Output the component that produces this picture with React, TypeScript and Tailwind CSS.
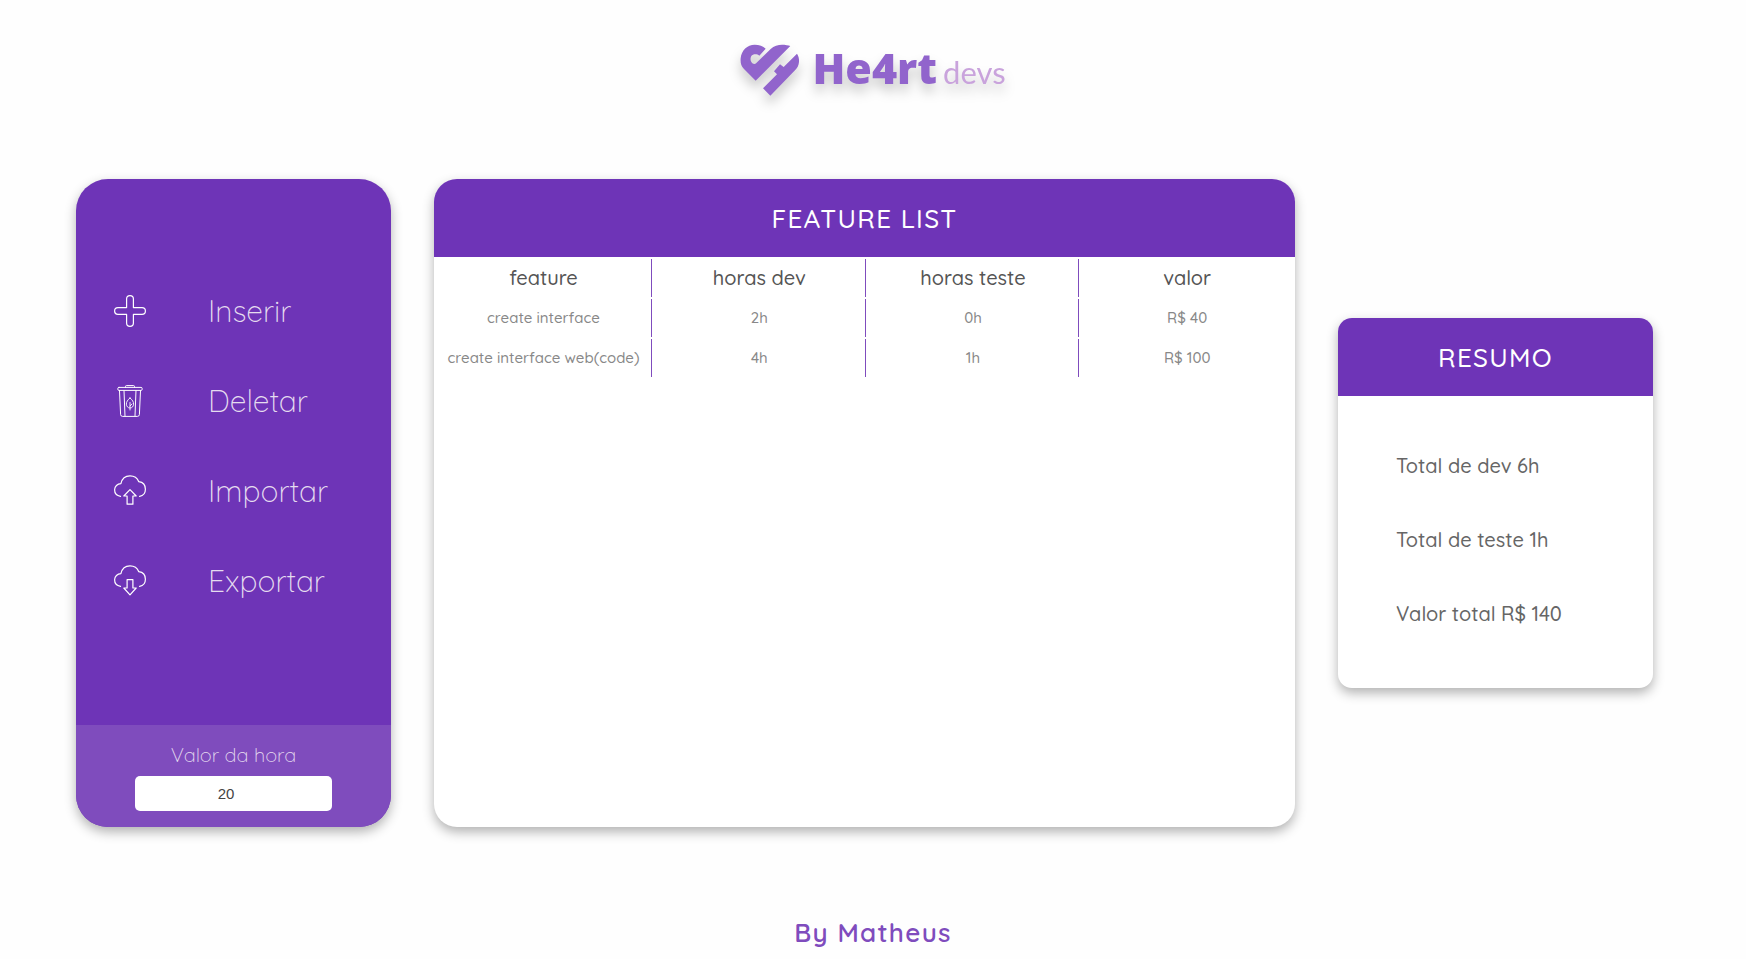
import { useState, type ReactNode } from "react";

function HeartLogo() {
  return (
    <svg viewBox="66 42 180 156" className="h-[52px] w-[60px] shrink-0 fill-[#9164cc]" aria-hidden="true">
      <path d="M113 152 L78 117 C69 108 67 98 68 85 C70 61 88 44 110 44 C124 44 135 48 143 56 L124 77 C117 71 105 71 100 78 C96 85 97 95 103 100 C108 103 112 102 115 99 L158 57 C168 47 180 44 192 44 C202 44 211 46 217 48 Z" />
      <path d="M237 71 C242 79 244 87 243 96 C242 107 238 114 231 121 L157 197 L135 175 L177 133 L168 124 L186 103 L197 111 Z" />
    </svg>
  );
}

function Icon({ children }: { children: ReactNode }) {
  return (
    <svg viewBox="0 0 32 32" className="size-8 shrink-0 fill-none stroke-white" strokeLinejoin="round" strokeLinecap="round" aria-hidden="true">
      {children}
    </svg>
  );
}

const cloud = "M6.5 21.3 C3 20.8 .6 18.3 .6 14.8 C.6 11.4 3.4 8.8 6.9 8.6 C8 3.8 11.6 .9 16 .9 C20.3 .9 23.4 3.2 24.8 6.7 C28.6 7.2 31.4 10 31.4 14.2 C31.4 17.8 29 20.7 25.6 21.3";

const actions = [
  {
    label: "Inserir",
    icon: (
      <path strokeWidth="1.2" d="M12.6 4 a3.4 3.4 0 0 1 6.8 0 V12.6 H28 a3.4 3.4 0 0 1 0 6.8 H19.4 V28 a3.4 3.4 0 0 1 -6.8 0 V19.4 H4 a3.4 3.4 0 0 1 0 -6.8 H12.6 Z" />
    ),
  },
  {
    label: "Deletar",
    icon: (
      <>
        <path d="M11.5 2.3 V1.4 Q11.5 .6 12.4 .6 H19.6 Q20.5 .6 20.5 1.4 V2.3" />
        <rect x="3.8" y="2.4" width="24.4" height="3" rx="1.2" />
        <path d="M5.5 5.6 L6.6 29.6 Q6.8 31.4 8.6 31.4 H23.4 Q25.2 31.4 25.4 29.6 L26.5 5.6" />
        <path d="M10 5.6 L11 31 M22 5.6 L21 31" />
        <path strokeWidth=".9" d="M16 13 C13.5 15 12.3 17 12.4 19.2 C12.5 21.5 14 23 16 23 C18 23 19.5 21.5 19.6 19.2 C19.7 17 18.5 15 16 13 Z M16 17.5 V25 M16 21 L18 19" />
      </>
    ),
  },
  {
    label: "Importar",
    icon: <path strokeWidth="1.2" d={`${cloud} M16 14.6 L22.2 21 H18.9 V29.2 H13.1 V21 H9.8 Z`} />,
  },
  {
    label: "Exportar",
    icon: <path strokeWidth="1.2" d={`${cloud} M16 29.8 L22.2 23 H18.9 V14.6 H13.1 V23 H9.8 Z`} />,
  },
];

const features = [
  { name: "create interface", dev: 2, test: 0, value: 40 },
  { name: "create interface web(code)", dev: 4, test: 1, value: 100 },
];

const columns = ["feature", "horas dev", "horas teste", "valor"];

const cardShadow = "shadow-[0_5px_12px_rgba(0,0,0,0.3)]";

function PanelTitle({ children }: { children: ReactNode }) {
  return (
    <h2 className="flex h-[78px] items-center justify-center bg-[#6e34b7] text-[26px] font-medium tracking-wider text-white">
      {children}
    </h2>
  );
}

export default function App() {
  const [rate, setRate] = useState("20");

  return (
    <div className="flex min-h-screen flex-col bg-[#fefefe] font-['Quicksand','Lato',sans-serif]">
      <header className="flex h-[179px] justify-center pt-11">
        <h1 className="flex h-[52px] items-center drop-shadow-[0_8px_6px_rgba(0,0,0,0.2)]">
          <HeartLogo />
          <span className="ml-3 flex items-baseline gap-[6px] pb-[6px] leading-none">
            <span className="font-['Noto_Sans',sans-serif] text-[43px] font-black text-[#9164cc]">He4rt</span>
            <span className="font-['Lato',sans-serif] text-[31px] text-[#c9a3dc]">devs</span>
          </span>
        </h1>
      </header>

      <main className="flex items-center gap-[43px] pr-[93px] pl-[76px]">
        <aside className={`flex min-h-[648px] w-[315px] shrink-0 flex-col overflow-hidden rounded-[32px] bg-[#6e34b7] ${cardShadow}`}>
          <nav className="flex flex-1 flex-col pt-[87px]">
            {actions.map((action) => (
              <button key={action.label} type="button" className="flex h-[90px] items-center gap-[62px] pl-[38px] text-left text-[30px] font-light text-[#e5dcef]">
                <Icon>{action.icon}</Icon>
                {action.label}
              </button>
            ))}
          </nav>
          <div className="flex h-[102px] flex-col items-center bg-[#7f4cbd] pt-[15px]">
            <label htmlFor="rate" className="h-9 text-[20px] leading-[30px] font-light text-[#e5dcef]">
              Valor da hora
            </label>
            <input
              id="rate"
              type="number"
              value={rate}
              onChange={(event) => setRate(event.target.value)}
              className="h-[35px] w-[197px] rounded-[5px] bg-white text-center font-['Liberation_Sans',sans-serif] text-[15px] text-[#444]"
            />
          </div>
        </aside>

        <section className={`min-h-[648px] flex-1 overflow-hidden rounded-[23px] bg-white ${cardShadow}`}>
          <PanelTitle>FEATURE LIST</PanelTitle>
          <table className="w-full table-fixed border-separate border-spacing-[2px] text-center">
            <thead>
              <tr className="h-[38px] text-[20px] leading-[26px] text-[#555]">
                {columns.map((column) => (
                  <th key={column} scope="col" className="border-r border-[#7f4cbd] p-0 font-medium first:w-[216px] last:border-r-0">
                    {column}
                  </th>
                ))}
              </tr>
            </thead>
            <tbody>
              {features.map((feature) => (
                <tr key={feature.name} className="h-[38px] text-[15px] leading-[20px] font-medium text-[#888]">
                  <td className="border-r border-[#7f4cbd] p-0">{feature.name}</td>
                  <td className="border-r border-[#7f4cbd] p-0">{`${feature.dev}h`}</td>
                  <td className="border-r border-[#7f4cbd] p-0">{`${feature.test}h`}</td>
                  <td className="p-0">{`R$ ${feature.value}`}</td>
                </tr>
              ))}
            </tbody>
          </table>
        </section>

        <section className={`min-h-[370px] w-[315px] shrink-0 overflow-hidden rounded-[14px] bg-white ${cardShadow}`}>
          <PanelTitle>RESUMO</PanelTitle>
          <div className="flex flex-col gap-11 pt-[55px] pl-[58px] text-[20px] leading-[30px] font-medium text-[#666]">
            <p>Total de dev 6h</p>
            <p>Total de teste 1h</p>
            <p>Valor total R$ 140</p>
          </div>
        </section>
      </main>

      <footer className="mt-auto pb-[10px] text-center text-[26px] leading-[32px] font-semibold tracking-wider text-[#7f4cbd]">
        By Matheus
      </footer>
    </div>
  );
}
